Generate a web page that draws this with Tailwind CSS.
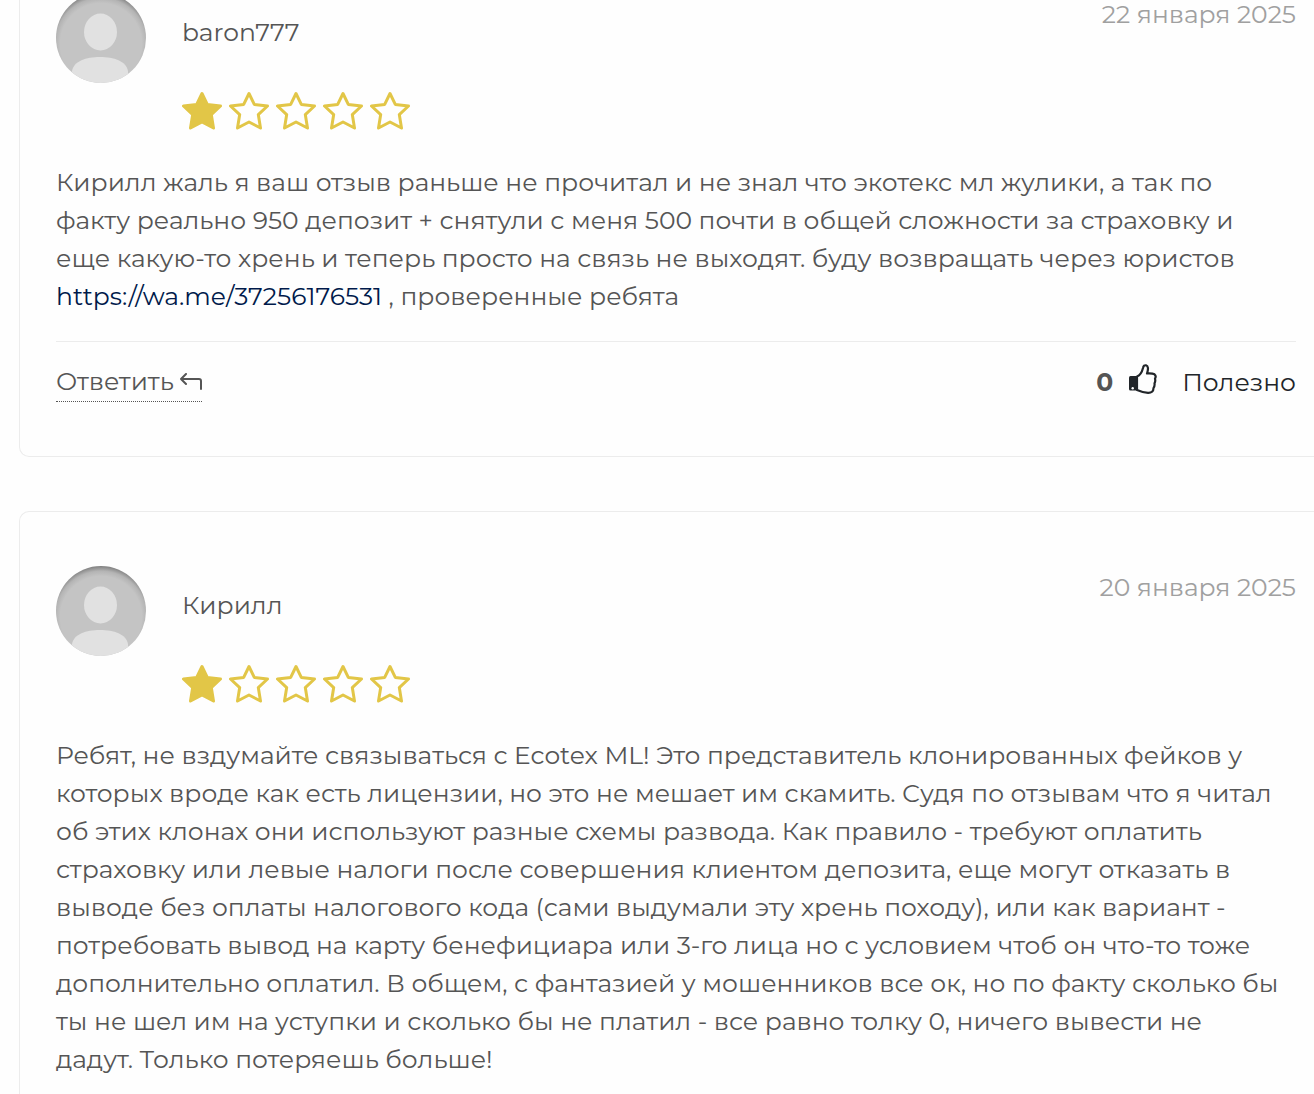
<!DOCTYPE html>
<html lang="ru">
<head>
    <meta charset="UTF-8">
    <meta name="viewport" content="width=device-width, initial-scale=1.0">
    <title>Отзывы</title>
    <script src="https://cdn.jsdelivr.net/npm/@tailwindcss/browser@4"></script>
</head>
<body class="bg-[#fefefe] overflow-hidden font-['Montserrat','Inter',sans-serif] text-[25px] leading-[38px] text-[#555555]">
    <!-- shared icons -->
    <svg class="absolute size-0">
        <defs>
            <radialGradient id="shade" gradientUnits="userSpaceOnUse" cx="45" cy="51" r="51">
                <stop offset="0.8" stop-color="#c4c4c4"/>
                <stop offset="0.9" stop-color="#b4b4b4"/>
                <stop offset="1" stop-color="#808080"/>
            </radialGradient>
            <clipPath id="round"><circle cx="45" cy="45" r="45"/></clipPath>
        </defs>
        <symbol id="star" viewBox="0 0 40 39">
            <path d="M20 2.500 L25.300 13.400 L38.500 15 L29.300 23.600 L31.500 37 L20 31 L8.500 37 L10.700 23.600 L1.500 15 L14.700 13.400 Z" stroke="#e2c647" stroke-width="3" stroke-linejoin="round"/>
        </symbol>
        <symbol id="avatar" viewBox="0 0 90 90">
            <g clip-path="url(#round)">
                <rect width="90" height="90" fill="url(#shade)"/>
                <ellipse cx="44.500" cy="39" rx="16.500" ry="18.500" fill="#e1e1e1"/>
                <path d="M16 90 V78 C18 68 30 64 44 64 C58 64 70 68 72 78 V90 Z" fill="#e1e1e1"/>
            </g>
        </symbol>
    </svg>

    <main class="-mt-[62px] pl-[19px] space-y-[54px]">
        <article class="border border-r-0 border-[#ececec] rounded-l-[10px] pt-[54px] pb-[54px] pl-9 pr-[18px]">
            <header class="flex items-start gap-9">
                <svg class="size-[90px] shrink-0"><use href="#avatar"/></svg>
                <div class="flex-1 pt-5">
                    <h3>baron777</h3>
                    <div class="mt-10 flex gap-[7px]" role="img" aria-label="1 из 5">
                        <svg class="w-10 h-[39px] fill-[#e2c647]"><use href="#star"/></svg>
                        <svg class="w-10 h-[39px] fill-none"><use href="#star"/></svg>
                        <svg class="w-10 h-[39px] fill-none"><use href="#star"/></svg>
                        <svg class="w-10 h-[39px] fill-none"><use href="#star"/></svg>
                        <svg class="w-10 h-[39px] fill-none"><use href="#star"/></svg>
                    </div>
                </div>
                <time class="pt-0.5 text-[#a0a0a0]" datetime="2025-01-22">22 января 2025</time>
            </header>
            <p class="mt-[33px] whitespace-nowrap">
                Кирилл жаль я ваш отзыв раньше не прочитал и не знал что экотекс мл жулики, а так по<br>
                факту реально 950 депозит + снятули с меня 500 почти в общей сложности за страховку и<br>
                еще какую-то хрень и теперь просто на связь не выходят. буду возвращать через юристов<br>
                <a href="https://wa.me/37256176531" class="text-[#001a4b]">https://wa.me/37256176531</a> , проверенные ребята
            </p>
            <footer class="mt-[26px] pt-5 border-t border-[#ececec] flex items-center justify-between">
                <a href="#" class="flex items-center gap-1.5 pb-px border-b border-dotted border-[#555555]">
                    Ответить
                    <svg class="w-[22px] h-[17px]" viewBox="0 0 22 17" fill="none" stroke="#555555" stroke-width="2" stroke-linecap="round" stroke-linejoin="round">
                        <path d="M6 1 L1 6 L6 11 M1 6 H19 Q21 6 21 8 V16"/>
                    </svg>
                </a>
                <div class="flex items-center">
                    <b class="mr-4">0</b>
                    <button type="button" class="flex items-center text-[#212529]">
                        <svg class="w-[28px] h-[30px] mr-[25px] -mt-1.5" viewBox="0 0 28 30">
                            <path d="M1.500 12 H8 V26.500 H1.500 Q0 26.500 0 25 V13.500 Q0 12 1.500 12 Z" fill="#212529"/>
                            <circle cx="3.700" cy="24.300" r="1.200" fill="#fefefe"/>
                            <path d="M8 12.500 C10.500 11.500 13 8 14 4 C14.400 1.800 15.600 1 17 1.300 C19.300 2 19.500 5 18 9.500 C21 9.300 24 9.500 25.500 10.300 C27 11.500 27 13 26 14.800 C26.500 16.500 26.300 18 25.500 19.300 C25.800 21 25.500 22.500 24.500 24 C24.500 27.500 22.500 28.900 19 28.800 C14.500 28.600 11.500 27.500 8 26 Z" fill="#fefefe" stroke="#212529" stroke-width="2.200" stroke-linejoin="round"/>
                        </svg>
                        Полезно
                    </button>
                </div>
            </footer>
        </article>

        <article class="border border-r-0 border-[#ececec] rounded-l-[10px] pt-[54px] pb-[54px] pl-9 pr-[18px]">
            <header class="flex items-start gap-9">
                <svg class="size-[90px] shrink-0"><use href="#avatar"/></svg>
                <div class="flex-1 pt-5">
                    <h3>Кирилл</h3>
                    <div class="mt-10 flex gap-[7px]" role="img" aria-label="1 из 5">
                        <svg class="w-10 h-[39px] fill-[#e2c647]"><use href="#star"/></svg>
                        <svg class="w-10 h-[39px] fill-none"><use href="#star"/></svg>
                        <svg class="w-10 h-[39px] fill-none"><use href="#star"/></svg>
                        <svg class="w-10 h-[39px] fill-none"><use href="#star"/></svg>
                        <svg class="w-10 h-[39px] fill-none"><use href="#star"/></svg>
                    </div>
                </div>
                <time class="pt-0.5 text-[#a0a0a0]" datetime="2025-01-20">20 января 2025</time>
            </header>
            <p class="mt-[33px] whitespace-nowrap">
                Ребят, не вздумайте связываться с Ecotex ML! Это представитель клонированных фейков у<br>
                которых вроде как есть лицензии, но это не мешает им скамить. Судя по отзывам что я читал<br>
                об этих клонах они используют разные схемы развода. Как правило - требуют оплатить<br>
                страховку или левые налоги после совершения клиентом депозита, еще могут отказать в<br>
                выводе без оплаты налогового кода (сами выдумали эту хрень походу), или как вариант -<br>
                потребовать вывод на карту бенефициара или 3-го лица но с условием чтоб он что-то тоже<br>
                дополнительно оплатил. В общем, с фантазией у мошенников все ок, но по факту сколько бы<br>
                ты не шел им на уступки и сколько бы не платил - все равно толку 0, ничего вывести не<br>
                дадут. Только потеряешь больше!
            </p>
        </article>
    </main>
</body>
</html>
